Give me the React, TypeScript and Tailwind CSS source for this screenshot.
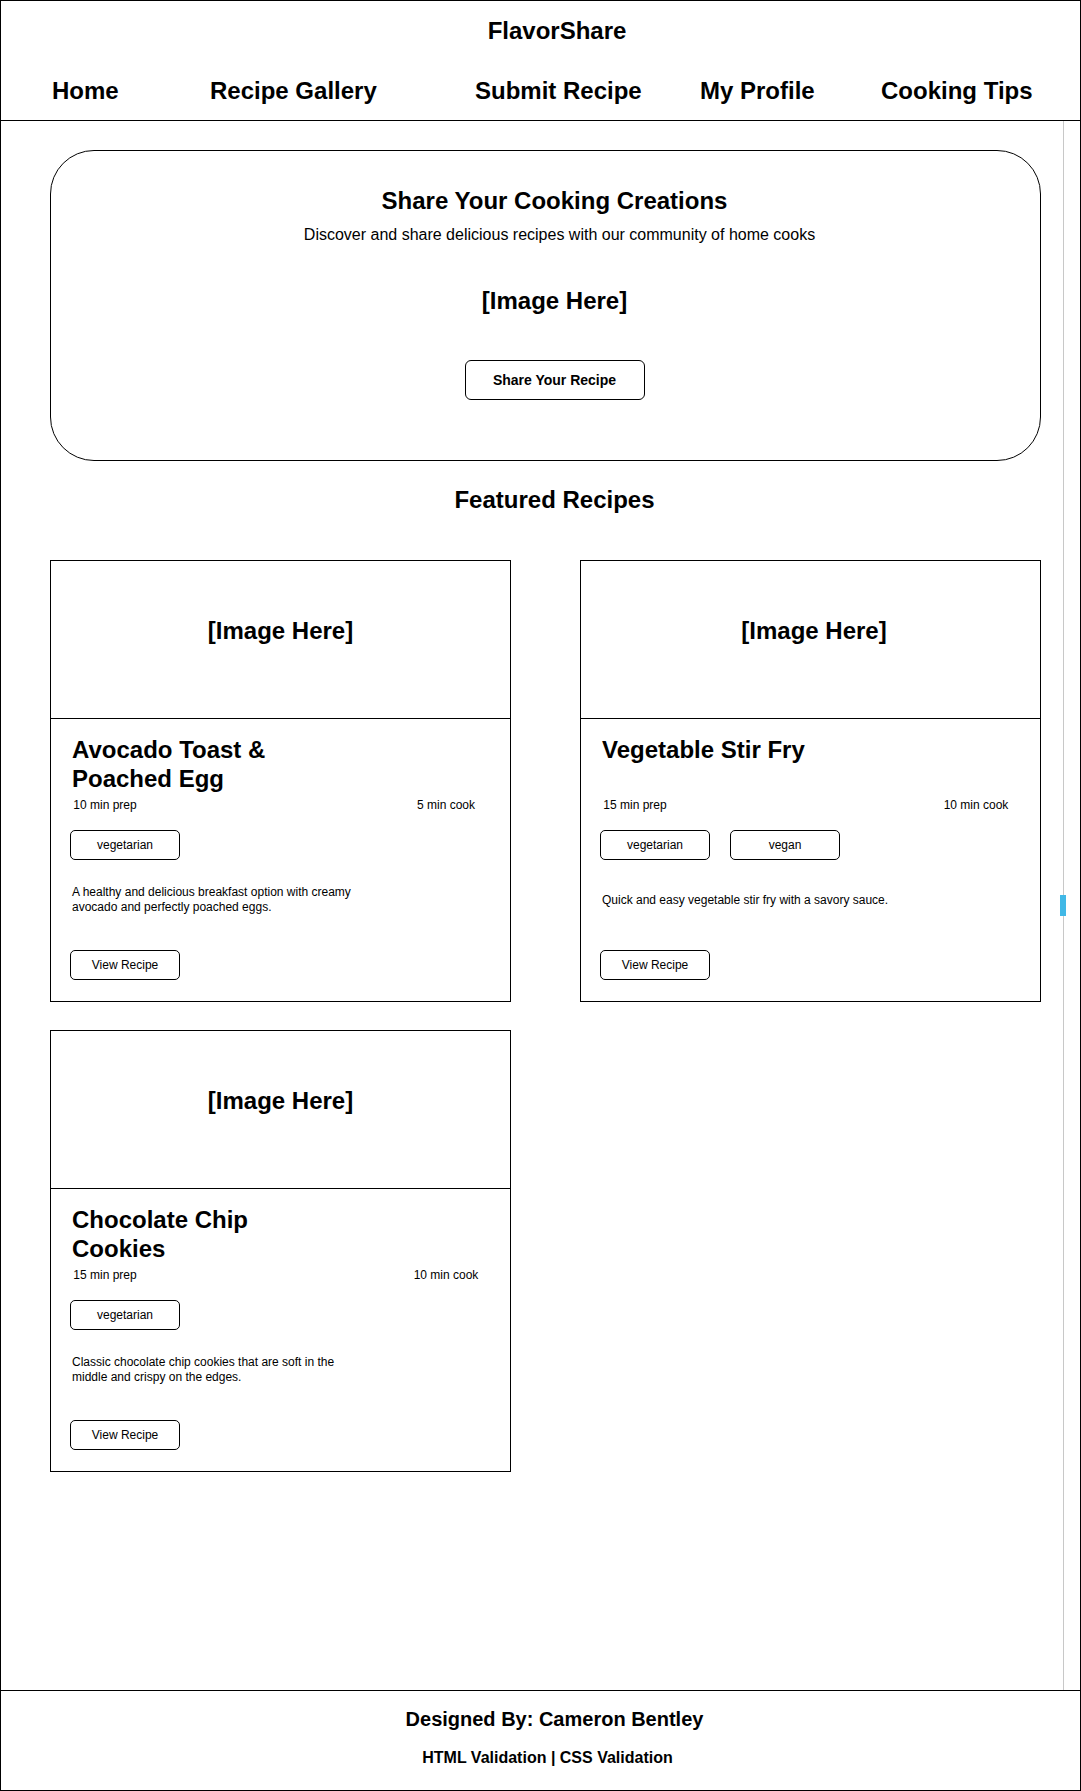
import React from "react";

type Recipe = {
  title: string;
  prep: string;
  cook: string;
  tags: string[];
  description: string;
  imgShift: string;
};

const recipes: Recipe[] = [
  {
    title: "Avocado Toast & Poached Egg",
    prep: "10 min prep",
    cook: "5 min cook",
    tags: ["vegetarian"],
    description:
      "A healthy and delicious breakfast option with creamy avocado and perfectly poached eggs.",
    imgShift: "pl-0",
  },
  {
    title: "Vegetable Stir Fry",
    prep: "15 min prep",
    cook: "10 min cook",
    tags: ["vegetarian", "vegan"],
    description: "Quick and easy vegetable stir fry with a savory sauce.",
    imgShift: "pl-[7px]",
  },
  {
    title: "Chocolate Chip Cookies",
    prep: "15 min prep",
    cook: "10 min cook",
    tags: ["vegetarian"],
    description:
      "Classic chocolate chip cookies that are soft in the middle and crispy on the edges.",
    imgShift: "pl-0",
  },
];

const navItems = [
  { label: "Home", width: "w-[158px]" },
  { label: "Recipe Gallery", width: "w-[265px]" },
  { label: "Submit Recipe", width: "w-[225px]" },
  { label: "My Profile", width: "w-[181px]" },
  { label: "Cooking Tips", width: "" },
];

function RecipeCard({ recipe }: { recipe: Recipe }) {
  return (
    <div className="h-[442px] border border-black flex flex-col">
      {/* Image placeholder */}
      <div className={`h-[158px] border-b border-black pt-[54px] text-center ${recipe.imgShift}`}>
        <span className="text-2xl leading-8 font-bold">[Image Here]</span>
      </div>

      {/* Body */}
      <div className="flex flex-col px-[19px] pt-[16px] pb-[21px]">
        <h3 className="h-[58px] w-[242px] pl-[2px] text-2xl leading-[29px] font-bold">
          {recipe.title}
        </h3>
        <div className="mt-[4px] flex justify-between text-xs leading-4">
          <span className="w-[70px] text-center">{recipe.prep}</span>
          <span className="w-[90px] text-center">{recipe.cook}</span>
        </div>
        <div className="mt-[17px] flex gap-[20px]">
          {recipe.tags.map((tag) => (
            <span
              key={tag}
              className="w-[110px] h-[30px] flex items-center justify-center border border-black rounded-[5px] text-xs"
            >
              {tag}
            </span>
          ))}
        </div>
        <div className="mt-[15px] h-[50px] flex items-center">
          <p className="w-[292px] pl-[2px] text-xs leading-[15px]">{recipe.description}</p>
        </div>
        <button className="mt-[25px] w-[110px] h-[30px] border border-black rounded-[5px] text-xs">
          View Recipe
        </button>
      </div>
    </div>
  );
}

export default function App() {
  return (
    <div className="w-[1081px] h-[1791px] border border-black bg-white text-black flex flex-col font-['Liberation_Sans',Arial,sans-serif]">
      {/* Header */}
      <header className="border-b border-black pt-[14px] pb-[13px]">
        <h1 className="pl-[33px] text-center text-2xl leading-8 font-bold">FlavorShare</h1>
        <nav className="mt-[28px] flex pl-[51px] text-2xl leading-8 font-bold">
          {navItems.map((item) => (
            <a key={item.label} href="#" className={item.width}>
              {item.label}
            </a>
          ))}
        </nav>
      </header>

      {/* Main */}
      <main className="flex-1 flex">
        <div className="flex-1 pl-[49px] pr-[22px] pt-[29px]">
          {/* Hero */}
          <section className="h-[311px] border border-black rounded-[44px] pt-[34px] pl-[18px] flex flex-col items-center">
            <h2 className="text-2xl leading-8 font-bold">Share Your Cooking Creations</h2>
            <p className="mt-[6px] ml-[10px] text-base leading-6">
              Discover and share delicious recipes with our community of home cooks
            </p>
            <div className="mt-[38px] text-2xl leading-8 font-bold">[Image Here]</div>
            <button className="mt-[43px] w-[180px] h-[40px] border border-black rounded-md text-sm font-bold">
              Share Your Recipe
            </button>
          </section>

          <h2 className="mt-[23px] mb-[44px] pl-[18px] text-center text-2xl leading-8 font-bold">
            Featured Recipes
          </h2>

          <div className="grid grid-cols-2 gap-x-[69px] gap-y-[28px]">
            {recipes.map((r) => (
              <RecipeCard key={r.title} recipe={r} />
            ))}
          </div>
        </div>

        {/* Scrollbar track */}
        <div className="relative w-[17px] border-l border-[#c8c8c8]">
          <div className="absolute left-[-4px] top-[774px] w-[6px] h-[21px] bg-[#41b8e6]" />
        </div>
      </main>

      {/* Footer */}
      <footer className="h-[100px] border-t border-black pt-[14px] flex flex-col items-center">
        <p className="pl-[28px] text-xl leading-7 font-bold">Designed By: Cameron Bentley</p>
        <p className="mt-[13px] pl-[14px] text-base leading-6 font-bold">
          HTML Validation | CSS Validation
        </p>
      </footer>
    </div>
  );
}
